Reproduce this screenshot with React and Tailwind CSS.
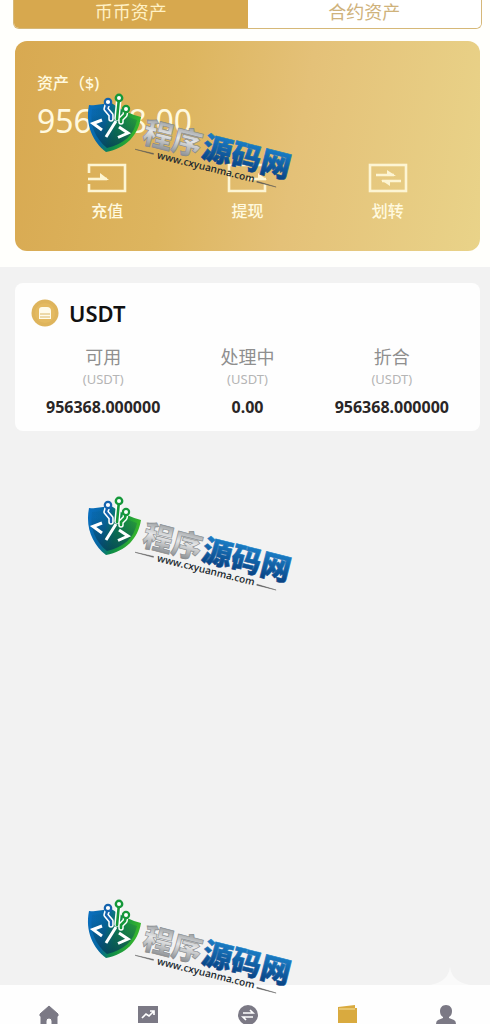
import React from 'react';

const balances = [
  { label: '可用', value: '956368.000000' },
  { label: '处理中', value: '0.00' },
  { label: '折合', value: '956368.000000' },
];

const DepositIcon = () => (
  <svg viewBox="0 0 40 30" className="w-10 h-[30px]" fill="none" stroke="#fdf5d3" strokeWidth="2.6">
    <path d="M2 10V2H38V28H2V21" />
    <path d="M1 16H20" />
    <path d="M13 10L22 17H13Z" fill="#fdf5d3" stroke="none" />
  </svg>
);

const WithdrawIcon = () => (
  <svg viewBox="0 0 40 30" className="w-10 h-[30px]" fill="none" stroke="#fdf5d3" strokeWidth="2.6">
    <path d="M38 10V2H2V28H38V21" />
    <path d="M21 16H39" />
    <path d="M31 10L40 17H31Z" fill="#fdf5d3" stroke="none" />
  </svg>
);

const TransferIcon = () => (
  <svg viewBox="0 0 40 30" className="w-10 h-[30px]" fill="none" stroke="#fdf5d3" strokeWidth="2.6">
    <rect x="2" y="2" width="36" height="26" />
    <path d="M8 12H26M14 18H33" />
    <path d="M19 7L28 13H19ZM22 23L13 17H22Z" fill="#fdf5d3" stroke="none" />
  </svg>
);

const actions = [
  { label: '充值', Icon: DepositIcon },
  { label: '提现', Icon: WithdrawIcon },
  { label: '划转', Icon: TransferIcon },
];

const CoinIcon = () => (
  <svg viewBox="0 0 28 28" className="w-7 h-7">
    <circle cx="14" cy="14" r="13.5" fill="#deb45c" />
    <circle cx="14" cy="14" r="10" fill="#e4ba61" />
    <path d="M8 11Q8 8 11 8H16Q20 8 20 12V20H8Z" fill="#fffbea" />
    <path d="M9 15H19M9 18H19" stroke="#dcb765" strokeWidth="1.2" />
  </svg>
);

const navItems = [
  {
    name: '首页',
    icon: (
      <path d="M10 1L19 9V11H18V20H13V16Q13 13 10 13Q7 13 7 16V20H2V11H1V9Z" fill="#7b7985" stroke="#7b7985" />
    ),
  },
  {
    name: '行情',
    icon: (
      <>
        <path d="M0 1H20V18H0Z" fill="#7b7985" />
        <path d="M4 13L8 9L11 11L16 6M12 6H16V10" fill="none" stroke="#fff" strokeWidth="1.7" />
      </>
    ),
  },
  {
    name: '交易',
    icon: (
      <>
        <circle cx="10" cy="10" r="10" fill="#7b7985" />
        <path d="M5 8H15L12 5M15 12H5L8 15" fill="none" stroke="#fff" strokeWidth="1.7" />
      </>
    ),
  },
  {
    name: '资产',
    icon: (
      <>
        <path d="M1 2L18 0V3H20V18H1Z" fill="#d9aa3f" />
        <path d="M2 4H18" stroke="#f2d98f" strokeWidth="1.2" />
      </>
    ),
  },
  {
    name: '我的',
    icon: (
      <path
        d="M10 0C14 0 16 3 16 6C16 9 15 11 13 12V13L18 15Q20 16 20 19H0Q0 16 2 15L7 13V12C5 11 4 9 4 6C4 3 6 0 10 0Z"
        fill="#7b7985"
      />
    ),
  },
];

const Watermark = ({ id }) => (
  <svg viewBox="0 0 230 110" className="block shrink-0 w-[230px] h-[110px]">
    <defs>
      <linearGradient id={`shield-${id}`} x1="0" y1="0" x2="1" y2="0.25">
        <stop offset="0" stopColor="#0a6fc2" />
        <stop offset="0.4" stopColor="#0767a0" />
        <stop offset="0.62" stopColor="#0d8a4a" />
        <stop offset="1" stopColor="#36b52c" />
      </linearGradient>
      <linearGradient id={`shade-${id}`} x1="0" y1="0" x2="0" y2="1">
        <stop offset="0.2" stopColor="#05405f" stopOpacity="0.1" />
        <stop offset="1" stopColor="#053a5a" stopOpacity="0.8" />
      </linearGradient>
      <linearGradient id={`silver-${id}`} x1="0" y1="0" x2="0" y2="1">
        <stop offset="0.15" stopColor="#8f9396" />
        <stop offset="0.5" stopColor="#e6e7e8" />
        <stop offset="0.9" stopColor="#83878b" />
      </linearGradient>
      <linearGradient id={`blue-${id}`} x1="0" y1="0" x2="0" y2="1">
        <stop offset="0.15" stopColor="#1c84cd" />
        <stop offset="0.9" stopColor="#073f80" />
      </linearGradient>
    </defs>
    {/* Shield */}
    <path
      d="M14 23Q25 24 35 20Q50 31 66 35C63 54 51 66 31 70C18 60 10 43 14 23Z"
      fill={`url(#shield-${id})`}
    />
    <path d="M17 27Q27 27 36 24Q49 34 62 38C59 53 49 62 32 66C21 57 14 43 17 27Z" fill={`url(#shade-${id})`} />
    {/* Circuit branches */}
    <g fill="none" strokeLinecap="round" strokeLinejoin="round">
      <path d="M33 20L31 27L36 33V37M44 16L42 36M51 28L50 33L46 37V40" stroke="#fff" strokeWidth="5.5" />
      <path d="M33 20L31 27L36 33V37" stroke="#1463ae" strokeWidth="2.4" />
      <path d="M44 16L42 37M51 28L50 33L46 37V40" stroke="#15983a" strokeWidth="2.6" />
      <circle cx="33" cy="20" r="3.2" fill="#fff" stroke="#1463ae" strokeWidth="2.2" />
      <circle cx="44" cy="16" r="3.2" fill="#fff" stroke="#15983a" strokeWidth="2.4" />
      <circle cx="51" cy="27" r="3.1" fill="#fff" stroke="#15983a" strokeWidth="2.2" />
    </g>
    {/* Code mark */}
    <path
      d="M27 38L18 41.5L27 48M41 39L31 55M44 45L53 51L43 55.5"
      fill="none"
      stroke="#fff"
      strokeWidth="3"
    />
    {/* Name and address */}
    <g transform="translate(66 60) rotate(14)">
      <g
        fontFamily="'Noto Sans CJK SC', sans-serif"
        fontSize="30"
        fontWeight="900"
      >
        <text x="0" y="0" fill={`url(#silver-${id})`} stroke="#85898c" strokeWidth="0.6">程序</text>
        <text x="61" y="0" fill={`url(#blue-${id})`} stroke={`url(#blue-${id})`} strokeWidth="0.6">源码网</text>
      </g>
      <text x="19" y="12" fontFamily="'Open Sans', sans-serif" fontSize="10" fontWeight="600" fill="#20282e">
        www.cxyuanma.com
      </text>
      <path d="M-4 8.5L15 8L15 9ZM122 10L142 11L122 11Z" fill="#555" stroke="#555" strokeWidth="0.4" />
    </g>
  </svg>
);

const App = () => {
  return (
    <div className="relative flex flex-col min-h-screen overflow-hidden bg-[#f2f2f2] font-['Noto_Sans','Noto_Sans_CJK_SC',sans-serif]">
      <header className="bg-[#fffffc] pb-4">
        {/* Account tabs */}
        <div className="flex mx-2 ml-[13px] mb-3 h-[29px] rounded-b-md border border-t-0 border-[#d6b878] overflow-hidden text-lg/6">
          <button type="button" className="flex-1 pb-2 bg-[#d7a84e] text-[#fff1c4]">币币资产</button>
          <button type="button" className="flex-1 pb-2 bg-white text-[#cfb27b]">合约资产</button>
        </div>

        {/* Total assets */}
        <section className="mx-[15px] mr-[10px] px-[22px] pt-8 pb-[30px] rounded-xl bg-[linear-gradient(100deg,#d8a951_0%,#ddb55f_35%,#e4c178_60%,#e9d389_100%)] text-[#fff9df]">
          <h2 className="text-base/5 font-medium">资产（$)</h2>
          <p className="mt-2 text-[32px]/10">956368.00</p>
          <div className="grid grid-cols-3 mt-[22px]">
            {actions.map(({ label, Icon }) => (
              <button key={label} type="button" className="flex flex-col items-center gap-2 text-base/5 font-medium">
                <Icon />
                {label}
              </button>
            ))}
          </div>
        </section>
      </header>

      {/* Coin balances */}
      <main className="flex-1">
        <section className="mt-4 ml-[15px] mr-[10px] px-4 pt-4 pb-3 rounded-lg bg-[#fefefe]">
          <h3 className="flex items-center gap-2.5 text-[22px]/7 font-semibold text-[#111]">
            <CoinIcon />
            USDT
          </h3>
          <dl className="grid grid-cols-3 mt-[18px] text-center">
            {balances.map((item) => (
              <div key={item.label}>
                <dt className="text-lg/6 text-[#8f8f8f]">
                  {item.label}
                  <span className="block text-[13px]/5 text-[#b5b5b5]">(USDT)</span>
                </dt>
                <dd className="mt-1.5 text-base/6 font-bold text-[#2a2626]">{item.value}</dd>
              </div>
            ))}
          </dl>
        </section>
      </main>

      {/* Bottom navigation */}
      <nav className="relative flex justify-between pl-[39px] pr-[34px] pt-5 h-[39px] bg-[#fefefe]">
        {navItems.map((item) => (
          <a key={item.name} href="#" aria-label={item.name}>
            <svg viewBox="0 0 20 20" className="block w-5 h-5">{item.icon}</svg>
          </a>
        ))}
        <svg viewBox="0 0 40 18" className="absolute right-5 bottom-full w-10 h-[18px]">
          <path d="M0 18Q18 15 20 0Q22 15 40 18Z" fill="#fafafa" />
        </svg>
      </nav>

      {/* Watermarks over the whole page */}
      <div className="absolute inset-0 flex flex-col gap-[293px] pl-[75px] pt-[82px] overflow-hidden pointer-events-none">
        <Watermark id="top" />
        <Watermark id="middle" />
        <Watermark id="bottom" />
      </div>
    </div>
  );
};

export default App;
